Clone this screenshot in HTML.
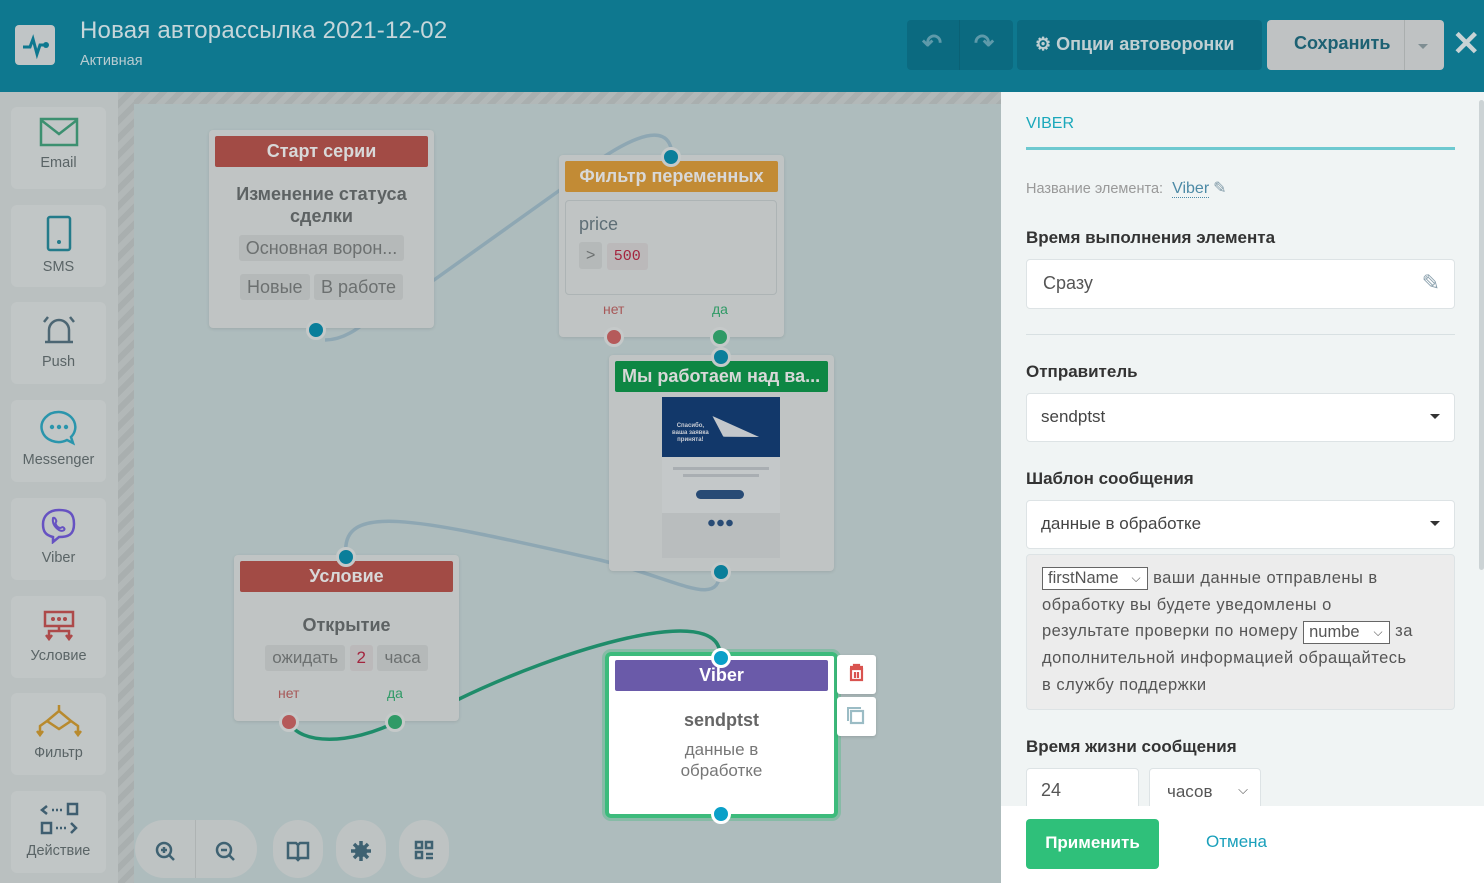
<!DOCTYPE html>
<html><head><meta charset="utf-8"><style>
*{box-sizing:border-box;margin:0;padding:0}
body{width:1484px;height:883px;overflow:hidden;font-family:"Liberation Sans","Noto Sans CJK SC",sans-serif;background:#aebcbd;position:relative}
.a{position:absolute}
.hdr{left:0;top:0;width:1484px;height:92px;background:#0e788f}
.logo{left:15px;top:25px;width:40px;height:40px;background:#c0c5c6;border-radius:4px}
.side{left:0;top:92px;width:118px;height:791px;background:#bac0c0}
.strip{left:118px;top:92px;width:16px;height:791px;background:repeating-linear-gradient(135deg,#b2b8b8 0 6px,#a9afaf 6px 12px)}
.stript{left:134px;top:92px;width:867px;height:12px;background:repeating-linear-gradient(135deg,#b2b8b8 0 6px,#a9afaf 6px 12px)}
.tile{left:11px;width:95px;height:82px;background:#c1c6c6;border-radius:6px;text-align:center;color:#5a6466;font-size:14.5px}
.tile svg{display:block;margin:10px auto 6px}
.node{background:#c0c4c4;border-radius:4px;box-shadow:0 1px 3px rgba(0,0,0,.1);text-align:center}
.nh{position:absolute;left:6px;right:6px;top:6px;height:31px;color:#d8d8d8;font-weight:bold;font-size:18px;line-height:30px;border-radius:2px;white-space:nowrap;overflow:hidden}
.chip{display:inline-block;background:#b5b9b9;border-radius:3px;padding:0 7px;color:#6c7070;font-size:18px;line-height:26px}
.dot{position:absolute;width:20px;height:20px;border-radius:50%;border:3px solid #c5c9c9}
.bl{background:#0a7e9a}.rd{background:#b55a5a}.gr{background:#2f9a66}
.btm{width:60px;height:58px;background:#bec3c3;border-radius:30px;top:820px}
.rp{left:1001px;top:92px;width:483px;height:791px;background:#f0f4f4}
.lbl{font-weight:bold;color:#333;font-size:17px}
.inp{background:#fff;border:1px solid #dde3e5;border-radius:4px;color:#444;font-size:17px}
.caret{position:absolute;right:14px;top:20px;border:5px solid transparent;border-top-color:#333}
</style></head><body>
<div class="a hdr"></div>
<div class="a logo"><svg width="40" height="40" viewBox="0 0 40 40"><path d="M8 22h7l3-8 4 15 3-9h5" fill="none" stroke="#0e788f" stroke-width="3"/><circle cx="31" cy="20" r="3" fill="#0e788f"/></svg></div>
<div class="a" style="left:80px;top:17px;color:#c6d6da;font-size:24px;letter-spacing:.2px">Новая авторассылка 2021-12-02</div>
<div class="a" style="left:80px;top:53px;color:#b8ccd1;font-size:14.5px">Активная</div>
<div class="a" style="left:907px;top:20px;width:106px;height:50px;background:#0b6a80;border-radius:4px"></div>
<div class="a" style="left:959px;top:20px;width:1px;height:50px;background:#0a6175"></div>
<div class="a" style="left:922px;top:29px;color:#5e9aaa;font-size:24px;font-weight:bold">↶</div>
<div class="a" style="left:974px;top:29px;color:#5e9aaa;font-size:24px;font-weight:bold">↷</div>
<div class="a" style="left:1017px;top:20px;width:245px;height:50px;background:#0b6a80;border-radius:4px;color:#c0cfd2;font-size:18px;font-weight:bold;line-height:48px;padding-left:18px">⚙ Опции автоворонки</div>
<div class="a" style="left:1267px;top:20px;width:177px;height:50px;background:#bfc2c3;border-radius:4px;color:#1d6173;font-size:18px;font-weight:bold;line-height:46px;padding-left:27px">Сохранить</div>
<div class="a" style="left:1404px;top:20px;width:1px;height:50px;background:#aaaeae"></div>
<div class="a" style="left:1418px;top:44px;border:5px solid transparent;border-top-color:#7e8d92"></div>
<div class="a" style="left:1452px;top:24px;color:#c8d3d5;font-size:34px;font-weight:bold">✕</div>

<div class="a side"></div><div class="a strip"></div><div class="a stript"></div>
<div class="a tile" style="top:107px"><svg width="40" height="32"><rect x="2" y="2" width="36" height="26" fill="none" stroke="#3c9070" stroke-width="2.5"/><path d="M2 3l18 14 18-14" fill="none" stroke="#3c9070" stroke-width="2.5"/></svg>Email</div>
<div class="a tile" style="top:205px"><svg width="40" height="38"><rect x="9" y="2" width="22" height="33" rx="2" fill="none" stroke="#237b8a" stroke-width="2.5"/><circle cx="20" cy="27" r="2" fill="#237b8a"/></svg>SMS</div>
<div class="a tile" style="top:302px"><svg width="40" height="36"><path d="M10 30V18a10 10 0 0 1 20 0v12zM6 30h28M5 10l4-5M35 10l-4-5" fill="none" stroke="#4c6673" stroke-width="2.5"/></svg>Push</div>
<div class="a tile" style="top:400px"><svg width="40" height="36"><path d="M20 2a17 15 0 1 0 8 28l6 3-2-6A17 15 0 0 0 20 2z" fill="none" stroke="#2a95ac" stroke-width="2.5"/><circle cx="13" cy="17" r="2.2" fill="#2a95ac"/><circle cx="20" cy="17" r="2.2" fill="#2a95ac"/><circle cx="27" cy="17" r="2.2" fill="#2a95ac"/></svg>Messenger</div>
<div class="a tile" style="top:498px"><svg width="40" height="36"><path d="M20 2c10 0 15 3 15 14s-6 13-15 13l-6 5v-5C6 27 4 23 4 16S9 2 20 2z" fill="none" stroke="#6652c2" stroke-width="2.5"/><path d="M14 10c2-1 4 3 3 4s0 5 4 6c2 0 2-2 4 0s-2 4-5 2-7-6-6-12z" fill="none" stroke="#6652c2" stroke-width="2"/></svg>Viber</div>
<div class="a tile" style="top:596px"><svg width="40" height="36"><rect x="6" y="6" width="28" height="14" fill="none" stroke="#ad4a4a" stroke-width="2.5"/><circle cx="14" cy="13" r="2" fill="#ad4a4a"/><circle cx="20" cy="13" r="2" fill="#ad4a4a"/><circle cx="26" cy="13" r="2" fill="#ad4a4a"/><path d="M20 20v5M10 32v-7h20v7M7 29l3 4 3-4M27 29l3 4 3-4" fill="none" stroke="#ad4a4a" stroke-width="2.5"/></svg>Условие</div>
<div class="a tile" style="top:693px"><svg width="48" height="36"><path d="M24 2v6L12 18l12 8 12-8-12-10M12 18l-7 5v8M36 18l7 5v8M2 28l3 4 3-4M40 28l3 4 3-4" fill="none" stroke="#b88a2e" stroke-width="2.5"/></svg>Фильтр</div>
<div class="a tile" style="top:791px"><svg width="40" height="36"><path d="M8 5l-5 4 5 4M29 3h9v10h-9zM3 22h9v10H3zM32 22l5 5-5 5" fill="none" stroke="#3f5e70" stroke-width="2.5"/><path d="M13 9h10M17 27h10" stroke="#3f5e70" stroke-width="2.5" stroke-dasharray="2 2"/></svg>Действие</div>

<svg class="a" style="left:0;top:0" width="1001" height="883">
<g fill="none" stroke-width="3.5">
<path d="M325 340 C360 340 380 300 434 280 L560 190 C620 140 670 115 672 155" stroke="#8ea7b3"/>
<path d="M346 555 C340 500 420 520 600 560 C680 580 720 610 720 570" stroke="#8ea7b3"/>
<path d="M289 722 C300 745 350 745 396 722" stroke="#1f8c6a"/>
<path d="M457 700 C560 650 720 600 720 655" stroke="#1f8c6a"/>
</g></svg>

<div class="a node" style="left:209px;top:130px;width:225px;height:198px">
<div class="nh" style="background:#a24b45">Старт серии</div>
<div style="margin-top:53px;font-weight:bold;color:#5d6263;font-size:18px;line-height:22px">Изменение статуса<br>сделки</div>
<div style="margin-top:8px"><span class="chip">Основная ворон...</span></div>
<div style="margin-top:13px"><span class="chip">Новые</span> <span class="chip">В работе</span></div>
<div class="dot bl" style="left:97px;top:190px"></div>
</div>

<div class="a node" style="left:559px;top:155px;width:225px;height:182px">
<div class="nh" style="background:#c28b35">Фильтр переменных</div>
<div class="a" style="left:6px;top:45px;width:212px;height:95px;border:1px solid #adb4b5;border-radius:4px;text-align:left;padding:13px 13px">
<div style="color:#5e6e76;font-size:18px">price</div>
<div style="margin-top:7px"><span class="chip" style="font-size:16px;line-height:27px">&gt;</span> <span class="chip" style="background:#bbb9ba;color:#a4253f;font-family:'Liberation Mono',monospace;font-size:15px;line-height:27px">500</span></div></div>
<div class="a" style="left:44px;top:146px;color:#a75858;font-size:14px">нет</div>
<div class="a" style="left:153px;top:146px;color:#2f9a66;font-size:14px">да</div>
<div class="dot bl" style="left:102px;top:-8px"></div>
<div class="dot rd" style="left:45px;top:172px"></div>
<div class="dot gr" style="left:151px;top:172px"></div>
</div>

<div class="a node" style="left:609px;top:355px;width:225px;height:216px">
<div class="nh" style="background:#0e8744;text-align:left;padding-left:7px">Мы работаем над ва...</div>
<div class="a" style="left:53px;top:42px;width:118px;height:60px;background:#12386a"><div style="position:absolute;left:48px;top:24px;width:50px;height:18px;background:#c3c7cb;transform:rotate(12deg);clip-path:polygon(0 0,100% 60%,30% 100%)"></div><div style="position:absolute;left:10px;top:26px;color:#c8ccd4;font-size:6px;font-weight:bold;line-height:7px">Спасибо,<br>ваша заявка<br>принята!</div></div>
<div class="a" style="left:53px;top:102px;width:118px;height:100px;background:#c4c8c9"></div>
<div class="a" style="left:64px;top:112px;width:96px;height:3px;background:#a9aeb2"></div>
<div class="a" style="left:74px;top:119px;width:76px;height:3px;background:#a9aeb2"></div>
<div class="a" style="left:87px;top:135px;width:48px;height:9px;background:#284b75;border-radius:5px"></div>
<div class="a" style="left:53px;top:158px;width:118px;height:45px;background:#b9bdbe"></div>
<div class="a" style="left:98px;top:164px;width:28px;height:8px;background:radial-gradient(circle,#284b75 3px,transparent 3.5px) 0 0/9px 8px"></div>
<div class="dot bl" style="left:102px;top:-8px"></div>
<div class="dot bl" style="left:102px;top:207px"></div>
</div>

<div class="a node" style="left:234px;top:555px;width:225px;height:166px">
<div class="nh" style="background:#a24b45">Условие</div>
<div style="margin-top:60px;font-weight:bold;color:#5d6263;font-size:18px">Открытие</div>
<div style="margin-top:9px"><span class="chip" style="font-size:17px">ожидать</span> <span class="chip" style="color:#a4253f;background:#bbb9ba;font-size:17px">2</span> <span class="chip" style="font-size:17px">часа</span></div>
<div class="a" style="left:44px;top:130px;color:#a75858;font-size:14px">нет</div>
<div class="a" style="left:153px;top:130px;color:#2f9a66;font-size:14px">да</div>
<div class="dot bl" style="left:102px;top:-8px"></div>
<div class="dot rd" style="left:45px;top:157px"></div>
<div class="dot gr" style="left:151px;top:157px"></div>
</div>

<div class="a" style="left:605px;top:652px;width:233px;height:166px;border:4px solid #3dbb7c;border-radius:6px;background:#fff;text-align:center;outline:3px solid rgba(61,187,124,.35)">
<div class="nh" style="left:6px;top:4px;background:#6a5aa9;color:#fff">Viber</div>
<div style="margin-top:54px;font-weight:bold;color:#666;font-size:18px">sendptst</div>
<div style="margin-top:8px;color:#777;font-size:17px;line-height:21px">данные в<br>обработке</div>
<div class="dot" style="left:102px;top:-8px;background:#0aa0c8;border-color:#fff"></div>
<div class="dot" style="left:102px;top:148px;background:#0aa0c8;border-color:#fff"></div>
</div>
<div class="a" style="left:837px;top:655px;width:39px;height:39px;background:#fff;border-radius:3px;box-shadow:0 1px 3px rgba(0,0,0,.15)"><svg width="39" height="39"><path d="M13 12h13M17 12v-2h5v2M14 14h11v11H14zM18 17v6M21 17v6" fill="none" stroke="#d9534f" stroke-width="2.2"/></svg></div>
<div class="a" style="left:837px;top:697px;width:39px;height:39px;background:#fff;border-radius:3px;box-shadow:0 1px 3px rgba(0,0,0,.15)"><svg width="39" height="39"><path d="M11 24V11h13" fill="none" stroke="#9bbcc5" stroke-width="2"/><rect x="14" y="14" width="12" height="12" fill="none" stroke="#9bbcc5" stroke-width="2.2"/></svg></div>

<div class="a btm" style="left:135px;width:122px"></div>
<div class="a" style="left:195px;top:820px;width:1px;height:58px;background:#aeb3b3"></div>
<div class="a btm" style="left:273px;width:50px"></div>
<div class="a btm" style="left:336px;width:50px"></div>
<div class="a btm" style="left:399px;width:50px"></div>
<svg class="a" style="left:150px;top:838px" width="300" height="26" fill="none" stroke="#3f6272" stroke-width="2.5">
<circle cx="14" cy="12" r="7"/><path d="M19 17l5 5M14 9v6M11 12h6"/>
<circle cx="74" cy="12" r="7"/><path d="M79 17l5 5M71 12h6"/>
<path d="M138 5h8l2 2 2-2h8v15h-8l-2 2-2-2h-8zM148 7v14"/>
<circle cx="211" cy="13" r="5" fill="#3f6272"/><path d="M211 3v4M211 19v4M201 13h4M217 13h4M204 6l3 3M215 17l3 3M218 6l-3 3M207 17l-3 3" stroke-width="3.5"/>
<rect x="266" y="4" width="6" height="6"/><rect x="276" y="4" width="6" height="6"/><rect x="266" y="14" width="6" height="6"/><path d="M276 16h7M276 20h7"/>
</svg>

<div class="a rp"></div>
<div class="a" style="left:1026px;top:115px;color:#1aa8bb;font-size:16px">VIBER</div>
<div class="a" style="left:1026px;top:147px;width:429px;height:3px;background:#6ec9d0"></div>
<div class="a" style="left:1026px;top:178px;color:#999;font-size:14.5px">Название элемента: <span style="color:#4d8aa6;font-size:16px;border-bottom:1px dotted #4d8aa6;margin-left:5px">Viber</span> <span style="color:#7e98a6;font-size:16px">✎</span></div>
<div class="a lbl" style="left:1026px;top:228px">Время выполнения элемента</div>
<div class="a inp" style="left:1026px;top:259px;width:429px;height:50px;padding:13px 16px;font-size:18px;color:#555">Сразу<span style="position:absolute;right:14px;top:10px;color:#8aa0ad;font-size:22px">✎</span></div>
<div class="a" style="left:1026px;top:334px;width:429px;height:1px;background:#d8e0e2"></div>
<div class="a lbl" style="left:1026px;top:362px">Отправитель</div>
<div class="a inp" style="left:1026px;top:393px;width:429px;height:49px;padding:13px 14px">sendptst<div class="caret"></div></div>
<div class="a lbl" style="left:1026px;top:469px">Шаблон сообщения</div>
<div class="a inp" style="left:1026px;top:500px;width:429px;height:49px;padding:13px 14px">данные в обработке<div class="caret"></div></div>
<div class="a" style="left:1026px;top:554px;width:429px;height:156px;background:#ececec;border:1px solid #dde3e5;border-radius:4px;padding:10px 15px;color:#555;font-size:16.5px;line-height:26.7px;letter-spacing:.5px;white-space:nowrap">
<span style="display:inline-block;border:1px solid #666;background:#fff;width:106px;height:23px;line-height:20px;padding-left:5px;vertical-align:middle;position:relative;letter-spacing:0">firstName<span style="position:absolute;right:0;top:0;width:22px;height:21px;background:#fff;text-align:center;font-size:12px">⌵</span></span> ваши данные отправлены в<br>обработку вы будете уведомлены о<br>результате проверки по номеру <span style="display:inline-block;border:1px solid #666;background:#fff;width:87px;height:23px;line-height:20px;padding-left:5px;vertical-align:middle;position:relative;letter-spacing:0">numbe<span style="position:absolute;right:0;top:0;width:22px;height:21px;text-align:center;font-size:12px">⌵</span></span> за<br>дополнительной информацией обращайтесь<br>в службу поддержки</div>
<div class="a lbl" style="left:1026px;top:737px">Время жизни сообщения</div>
<div class="a inp" style="left:1026px;top:768px;width:113px;height:45px;padding:11px 14px;font-size:18px;color:#555">24</div>
<div class="a inp" style="left:1149px;top:768px;width:112px;height:45px;padding:13px 17px;color:#555">часов<span style="position:absolute;right:12px;top:13px;font-size:13px">⌵</span></div>
<div class="a" style="left:1001px;top:806px;width:483px;height:77px;background:#fff"></div>
<div class="a" style="left:1026px;top:819px;width:133px;height:50px;background:#2fc07a;border-radius:4px;color:#fff;font-weight:bold;font-size:17px;line-height:48px;text-align:center">Применить</div>
<div class="a" style="left:1206px;top:832px;color:#1aa0bb;font-size:17px">Отмена</div>
<div class="a" style="left:1479px;top:100px;width:5px;height:470px;background:#ccd3d5;border-radius:3px"></div>
</body></html>
